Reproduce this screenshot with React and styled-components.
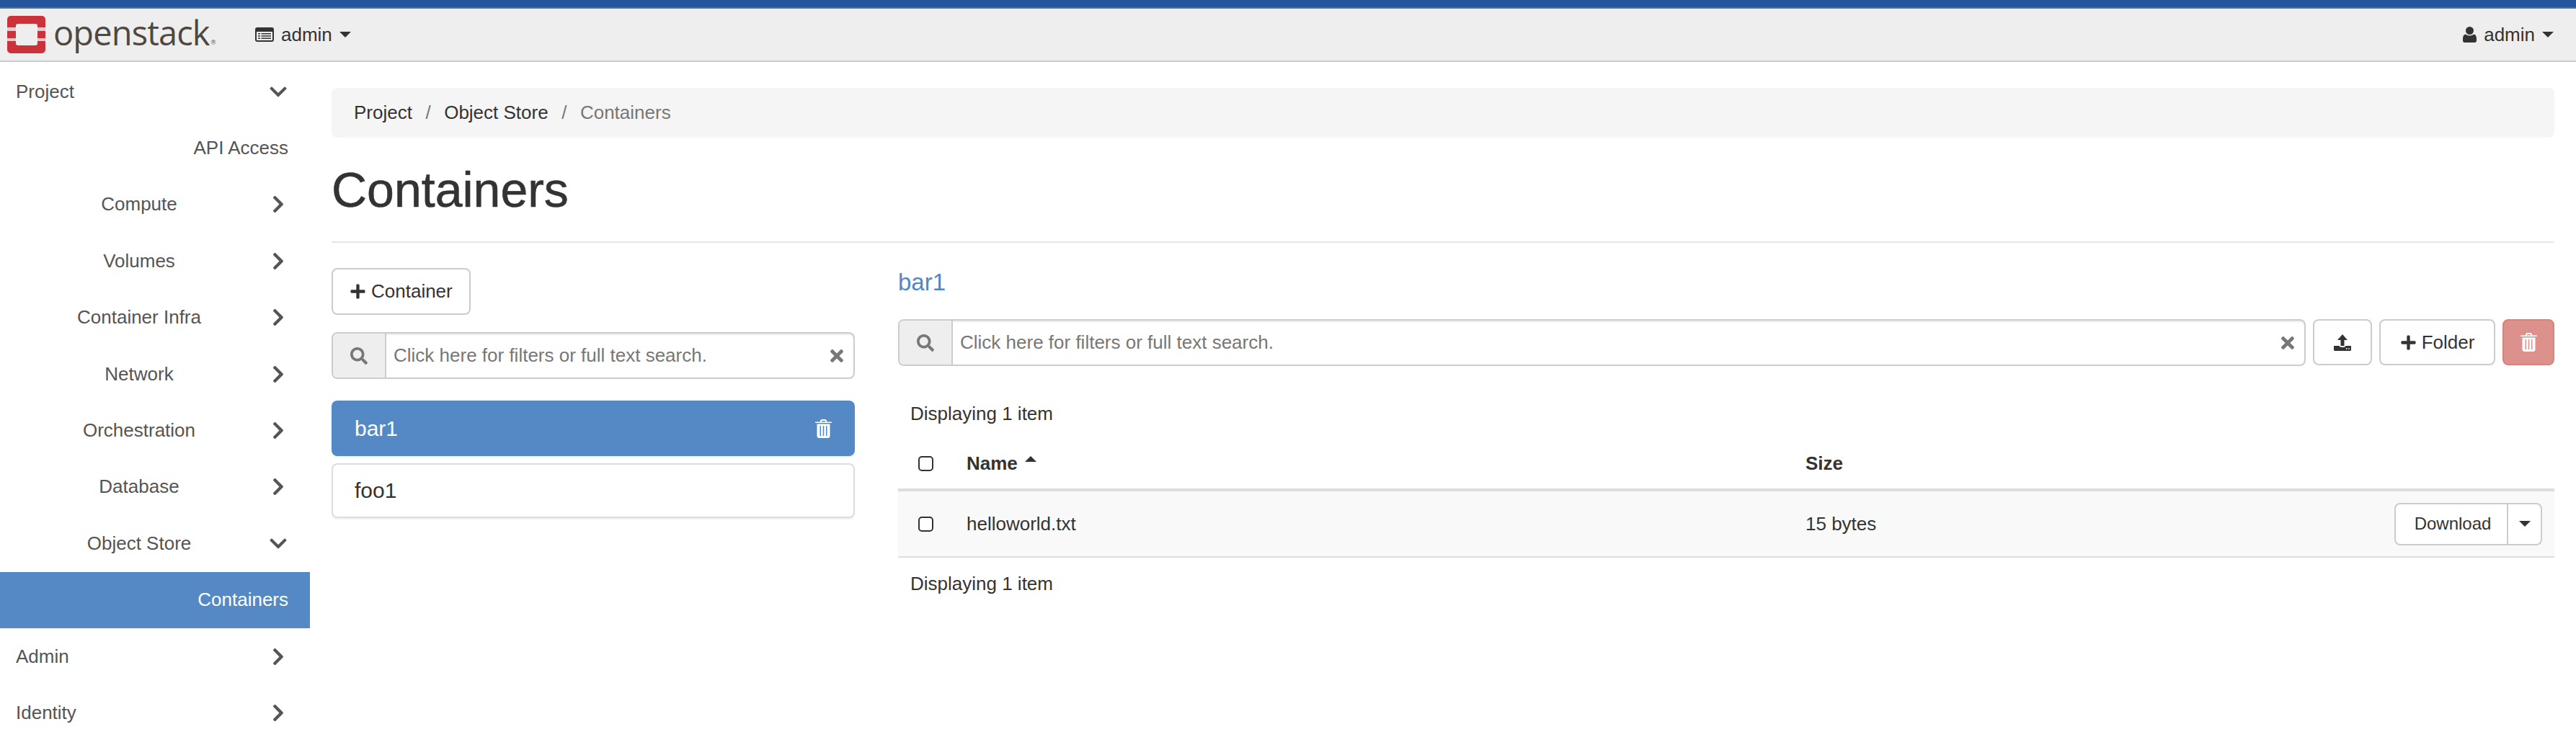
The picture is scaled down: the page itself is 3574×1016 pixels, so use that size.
import React from "react";
import styled, { createGlobalStyle } from "styled-components";
import {
  FaChevronDown,
  FaChevronRight,
  FaPlus,
  FaSearch,
  FaTimes,
} from "react-icons/fa";

const GlobalStyle = createGlobalStyle`
  html, body {
    margin: 0;
    height: 100%;
    background: #fff;
    overflow: hidden;
  }
  body {
    font-family: "Liberation Sans", Arial, sans-serif;
    font-size: 26px;
    color: #333;
  }
  * { box-sizing: border-box; }
`;

const Page = styled.div`
  width: 3574px;
  height: 1016px;
  overflow: hidden;
  display: flex;
  flex-direction: column;
`;

const TopStripe = styled.div`
  height: 12px;
  background: #25559a;
  border-bottom: 2px solid #4a74ad;
  flex: none;
`;

const Navbar = styled.header`
  height: 74px;
  flex: none;
  background: #eee;
  border-bottom: 2px solid #ccc;
  display: flex;
  align-items: center;
  padding: 0 31px 0 10px;
`;

const Brand = styled.div`
  display: flex;
  align-items: center;
  width: 344px;
`;

const BrandName = styled.span`
  font-family: "Open Sans", sans-serif;
  font-size: 47px;
  font-weight: 500;
  line-height: 52px;
  letter-spacing: -0.9px;
  color: #4e4841;
  margin-left: 11px;
  position: relative;
  top: -3px;
`;

const BrandMark = styled.sup`
  font-family: "Liberation Sans", sans-serif;
  font-size: 9px;
  line-height: 9px;
  font-weight: 400;
  color: #4e4841;
  letter-spacing: 0;
  position: relative;
  top: -1px;
  margin-left: 2px;
  vertical-align: baseline;
`;

const NavMenu = styled.div`
  display: flex;
  align-items: center;
  gap: 10px;
  color: #333;
`;

const Caret = styled.span`
  display: inline-block;
  width: 0;
  height: 0;
  border-left: 8px solid transparent;
  border-right: 8px solid transparent;
  border-top: 8px solid #333;
`;

const SortCaret = styled(Caret)`
  border-top: 0;
  border-bottom: 8px solid #333;
  margin-left: 10px;
  position: relative;
  top: -6px;
`;

const Spacer = styled.div`
  flex: 1;
`;

const Body = styled.div`
  flex: 1;
  display: flex;
  min-height: 0;
`;

const Sidebar = styled.nav`
  width: 430px;
  flex: none;
  padding-top: 2px;
`;

const NavRow = styled.div`
  height: 78.4px;
  display: flex;
  align-items: center;
  color: ${(p) => (p.$active ? "#fff" : "#555")};
  background: ${(p) => (p.$active ? "#5589c5" : "transparent")};
`;

const labelWidths = { top: "370px", leaf: "400px", sub: "386px" };
const labelAligns = { top: "left", leaf: "right", sub: "center" };

const NavLabel = styled.span`
  width: ${(p) => labelWidths[p.$level]};
  flex: none;
  padding-left: ${(p) => (p.$level === "top" ? "22px" : "0")};
  text-align: ${(p) => labelAligns[p.$level]};
`;

const NavChevron = styled.span`
  color: #555;
  display: flex;
  align-items: center;
  justify-content: center;
  width: 24px;
  font-size: 27px;
  margin-left: ${(p) => (p.$level === "sub" ? "-12px" : "4px")};
`;

const Main = styled.main`
  flex: 1;
  min-width: 0;
  padding: 36px 30px 0;
`;

const Breadcrumb = styled.div`
  height: 69px;
  background: #f5f5f5;
  border-radius: 8px;
  display: flex;
  align-items: center;
  padding: 0 31px;
`;

const Crumb = styled.span`
  color: ${(p) => (p.$current ? "#777" : "#333")};
`;

const CrumbSep = styled.span`
  color: #777;
  margin: 0 18.5px;
`;

const PageHeader = styled.div`
  height: 146px;
  display: flex;
  align-items: center;
  border-bottom: 2px solid #e5e5e5;
`;

const Title = styled.h1`
  margin: 0;
  font-size: 68px;
  font-weight: 400;
  line-height: 1.1;
  color: #333;
  -webkit-text-stroke: 0.6px #333;
`;

const Columns = styled.div`
  display: flex;
  gap: 60px;
  padding-top: 35px;
`;

const LeftColumn = styled.section`
  width: 726px;
  flex: none;
`;

const RightColumn = styled.section`
  flex: 1;
  min-width: 0;
`;

const Button = styled.div`
  display: inline-flex;
  align-items: center;
  justify-content: center;
  gap: 7px;
  height: ${(p) => p.$height || 64}px;
  width: ${(p) => (p.$width ? `${p.$width}px` : "auto")};
  padding: 0 ${(p) => (p.$width ? 0 : 23)}px;
  background: #fff;
  border: 2px solid #ccc;
  border-radius: 8px;
  color: #333;
  flex: none;
`;

const DangerButton = styled(Button)`
  background: #dd918c;
  border-color: #d98279;
`;

const SearchBar = styled.div`
  display: flex;
  flex: ${(p) => (p.$grow ? 1 : "none")};
  height: 65px;
  margin-top: ${(p) => p.$top || 0}px;
  border: 2px solid #ccc;
  border-radius: 8px;
  overflow: hidden;
  box-shadow: inset 0 2px 2px rgba(0, 0, 0, 0.08);
  background: #fff;
`;

const SearchAddon = styled.div`
  width: 74px;
  flex: none;
  display: flex;
  align-items: center;
  justify-content: center;
  background: #eee;
  border-right: 2px solid #ccc;
  color: #777;
  font-size: 24px;
`;

const SearchText = styled.div`
  flex: 1;
  display: flex;
  align-items: center;
  padding-left: 10px;
  color: #777;
`;

const SearchClear = styled.div`
  width: 46px;
  flex: none;
  display: flex;
  align-items: center;
  justify-content: center;
  color: #777;
  font-size: 26px;
`;

const ContainerList = styled.div`
  margin-top: 30px;
  display: flex;
  flex-direction: column;
  gap: 10px;
`;

const ContainerItem = styled.div`
  height: ${(p) => (p.$active ? 77 : 76)}px;
  display: flex;
  align-items: center;
  justify-content: space-between;
  padding: 0 32px 0 ${(p) => (p.$active ? 32 : 30)}px;
  font-size: 30px;
  border-radius: 8px;
  background: ${(p) => (p.$active ? "#5589c5" : "#fff")};
  color: ${(p) => (p.$active ? "#fff" : "#333")};
  border: ${(p) => (p.$active ? "none" : "2px solid #ddd")};
  box-shadow: 0 2px 2px rgba(0, 0, 0, 0.06);
`;

const DetailTitle = styled.div`
  height: 40px;
  display: flex;
  align-items: center;
  font-size: 33px;
  color: #4f87c7;
`;

const ToolRow = styled.div`
  display: flex;
  gap: 10px;
  margin-top: 31px;
`;

const TableInfo = styled.div`
  padding: ${(p) => p.$top || 0}px 0 0 17px;
  height: ${(p) => p.$height}px;
  display: flex;
  align-items: center;
`;

const TableRow = styled.div`
  display: flex;
  align-items: center;
  height: ${(p) => p.$height}px;
  background: ${(p) => (p.$striped ? "#f9f9f9" : "transparent")};
  border-bottom: ${(p) => p.$rule}px solid #ddd;
`;

const CheckCell = styled.div`
  width: 95px;
  flex: none;
  padding-left: 28px;
  display: flex;
`;

const Checkbox = styled.span`
  width: 21px;
  height: 21px;
  border: 2px solid #333;
  border-radius: 5px;
  background: #fff;
`;

const NameCell = styled.div`
  width: 1164px;
  flex: none;
  display: flex;
  align-items: center;
  font-weight: ${(p) => (p.$head ? 700 : 400)};
`;

const SizeCell = styled.div`
  flex: 1;
  font-weight: ${(p) => (p.$head ? 700 : 400)};
`;

const ActionCell = styled.div`
  display: flex;
  flex: none;
  margin-right: 17px;
`;

const SplitMain = styled(Button)`
  border-radius: 8px 0 0 8px;
  border-right-width: 1px;
  font-size: 24px;
  padding-left: 4px;
`;

const SplitToggle = styled(Button)`
  border-radius: 0 8px 8px 0;
  border-left-width: 1px;
`;

const OpenStackLogo = () => (
  <svg width="53" height="52" viewBox="0 0 53 52">
    <path
      fill="#cb333b"
      fillRule="evenodd"
      d="M5 0h43a5 5 0 0 1 5 5v42a5 5 0 0 1-5 5H5a5 5 0 0 1-5-5V5a5 5 0 0 1 5-5zM15 11a3 3 0 0 0-3 3v24a3 3 0 0 0 3 3h24a3 3 0 0 0 3-3V14a3 3 0 0 0-3-3z"
    />
    <rect x="0" y="16" width="12" height="5" fill="#ecc6c8" />
    <rect x="0" y="31" width="12" height="4" fill="#ecc6c8" />
    <rect x="42" y="16" width="11" height="5" fill="#ecc6c8" />
    <rect x="42" y="31" width="11" height="4" fill="#ecc6c8" />
  </svg>
);

const ListAltIcon = () => (
  <svg width="26" height="20" viewBox="0 0 26 20">
    <rect width="26" height="20" rx="3" fill="#333" />
    <rect x="2" y="6" width="22" height="12" rx="1" fill="#eee" />
    <path
      fill="#333"
      d="M4 8h3v1.500H4zM8.500 8H22v1.500H8.500zM4 11.200h3v1.500H4zM8.500 11.200H22v1.500H8.500zM4 14.400h3v1.500H4zM8.500 14.400H22v1.500H8.500z"
    />
  </svg>
);

const UserIcon = () => (
  <svg width="19" height="22" viewBox="0 0 19 22">
    <circle cx="9.500" cy="5.500" r="5.500" fill="#333" />
    <path
      fill="#333"
      d="M3.500 10.500c1.500 1.300 3.700 2 6 2s4.500-.7 6-2c2.300.5 3.500 2.900 3.500 6.500v2.500c0 1.400-1 2.500-2.500 2.500h-14C1 22 0 20.900 0 19.500V17c0-3.600 1.200-6 3.500-6.500z"
    />
  </svg>
);

const TrashIcon = ({ color = "#fff", slot = "#5589c5" }) => (
  <svg width="23" height="26" viewBox="0 0 23 26">
    <path
      fill={color}
      d="M7 3.500V2.200C7 1 8 0 9.200 0h4.600C15 0 16 1 16 2.200v1.300h6c.6 0 1 .4 1 1v.5H0v-.5c0-.6.4-1 1-1zM9 3.500h5V2H9z"
    />
    <path
      fill={color}
      d="M2.500 6.500h18V23c0 1.700-1.300 3-3 3h-12c-1.700 0-3-1.300-3-3z"
    />
    <path
      fill={slot}
      d="M6.500 9h1.500v14H6.500zM10.750 9h1.500v14h-1.500zM15 9h1.500v14H15z"
    />
  </svg>
);

const UploadIcon = () => (
  <svg width="24" height="23" viewBox="0 0 24 23">
    <path fill="#333" d="M12 0l7 8h-4.500v8h-5V8H5z" />
    <path
      fill="#333"
      fillRule="evenodd"
      d="M0 16h7.500c.4 1.400 2.200 2 4.500 2s4.100-.6 4.500-2H24v5.500c0 .8-.7 1.500-1.500 1.500h-21C.7 23 0 22.300 0 21.500zM17 19.200v1.600h1.600v-1.600zM20.200 19.200v1.600h1.600v-1.600z"
    />
  </svg>
);

const navItems = [
  { label: "Project", level: "top", chevron: "down" },
  { label: "API Access", level: "leaf" },
  { label: "Compute", level: "sub", chevron: "right" },
  { label: "Volumes", level: "sub", chevron: "right" },
  { label: "Container Infra", level: "sub", chevron: "right" },
  { label: "Network", level: "sub", chevron: "right" },
  { label: "Orchestration", level: "sub", chevron: "right" },
  { label: "Database", level: "sub", chevron: "right" },
  { label: "Object Store", level: "sub", chevron: "down" },
  { label: "Containers", level: "leaf", active: true },
  { label: "Admin", level: "top", chevron: "right" },
  { label: "Identity", level: "top", chevron: "right" },
];

const Search = ({ grow, top }) => (
  <SearchBar $grow={grow} $top={top}>
    <SearchAddon>
      <FaSearch />
    </SearchAddon>
    <SearchText>Click here for filters or full text search.</SearchText>
    <SearchClear>
      <FaTimes />
    </SearchClear>
  </SearchBar>
);

export default function App() {
  return (
    <Page>
      <GlobalStyle />
      <TopStripe />
      <Navbar>
        <Brand>
          <OpenStackLogo />
          <BrandName>
            openstack<BrandMark>®</BrandMark>
          </BrandName>
        </Brand>
        <NavMenu>
          <ListAltIcon />
          admin
          <Caret />
        </NavMenu>
        <Spacer />
        <NavMenu>
          <UserIcon />
          admin
          <Caret />
        </NavMenu>
      </Navbar>
      <Body>
        <Sidebar>
          {navItems.map((item) => (
            <NavRow key={item.label} $active={item.active}>
              <NavLabel $level={item.level}>{item.label}</NavLabel>
              {item.chevron && (
                <NavChevron $level={item.level}>
                  {item.chevron === "down" ? (
                    <FaChevronDown />
                  ) : (
                    <FaChevronRight />
                  )}
                </NavChevron>
              )}
            </NavRow>
          ))}
        </Sidebar>
        <Main>
          <Breadcrumb>
            <Crumb>Project</Crumb>
            <CrumbSep>/</CrumbSep>
            <Crumb>Object Store</Crumb>
            <CrumbSep>/</CrumbSep>
            <Crumb $current>Containers</Crumb>
          </Breadcrumb>
          <PageHeader>
            <Title>Containers</Title>
          </PageHeader>
          <Columns>
            <LeftColumn>
              <Button $height={65}>
                <FaPlus size={23} />
                Container
              </Button>
              <Search top={24} />
              <ContainerList>
                <ContainerItem $active>
                  bar1
                  <TrashIcon />
                </ContainerItem>
                <ContainerItem>foo1</ContainerItem>
              </ContainerList>
            </LeftColumn>
            <RightColumn>
              <DetailTitle>bar1</DetailTitle>
              <ToolRow>
                <Search grow />
                <Button $width={82}>
                  <UploadIcon />
                </Button>
                <Button $width={161}>
                  <FaPlus size={23} />
                  Folder
                </Button>
                <DangerButton $width={72}>
                  <TrashIcon slot="#dd918c" />
                </DangerButton>
              </ToolRow>
              <TableInfo $height={100} $top={33}>
                Displaying 1 item
              </TableInfo>
              <TableRow $height={74} $rule={4}>
                <CheckCell>
                  <Checkbox />
                </CheckCell>
                <NameCell $head>
                  Name
                  <SortCaret />
                </NameCell>
                <SizeCell $head>Size</SizeCell>
              </TableRow>
              <TableRow $height={92} $rule={2} $striped>
                <CheckCell>
                  <Checkbox />
                </CheckCell>
                <NameCell>helloworld.txt</NameCell>
                <SizeCell>15 bytes</SizeCell>
                <ActionCell>
                  <SplitMain $width={157} $height={59}>
                    Download
                  </SplitMain>
                  <SplitToggle $width={48} $height={59}>
                    <Caret />
                  </SplitToggle>
                </ActionCell>
              </TableRow>
              <TableInfo $height={72}>Displaying 1 item</TableInfo>
            </RightColumn>
          </Columns>
        </Main>
      </Body>
    </Page>
  );
}
